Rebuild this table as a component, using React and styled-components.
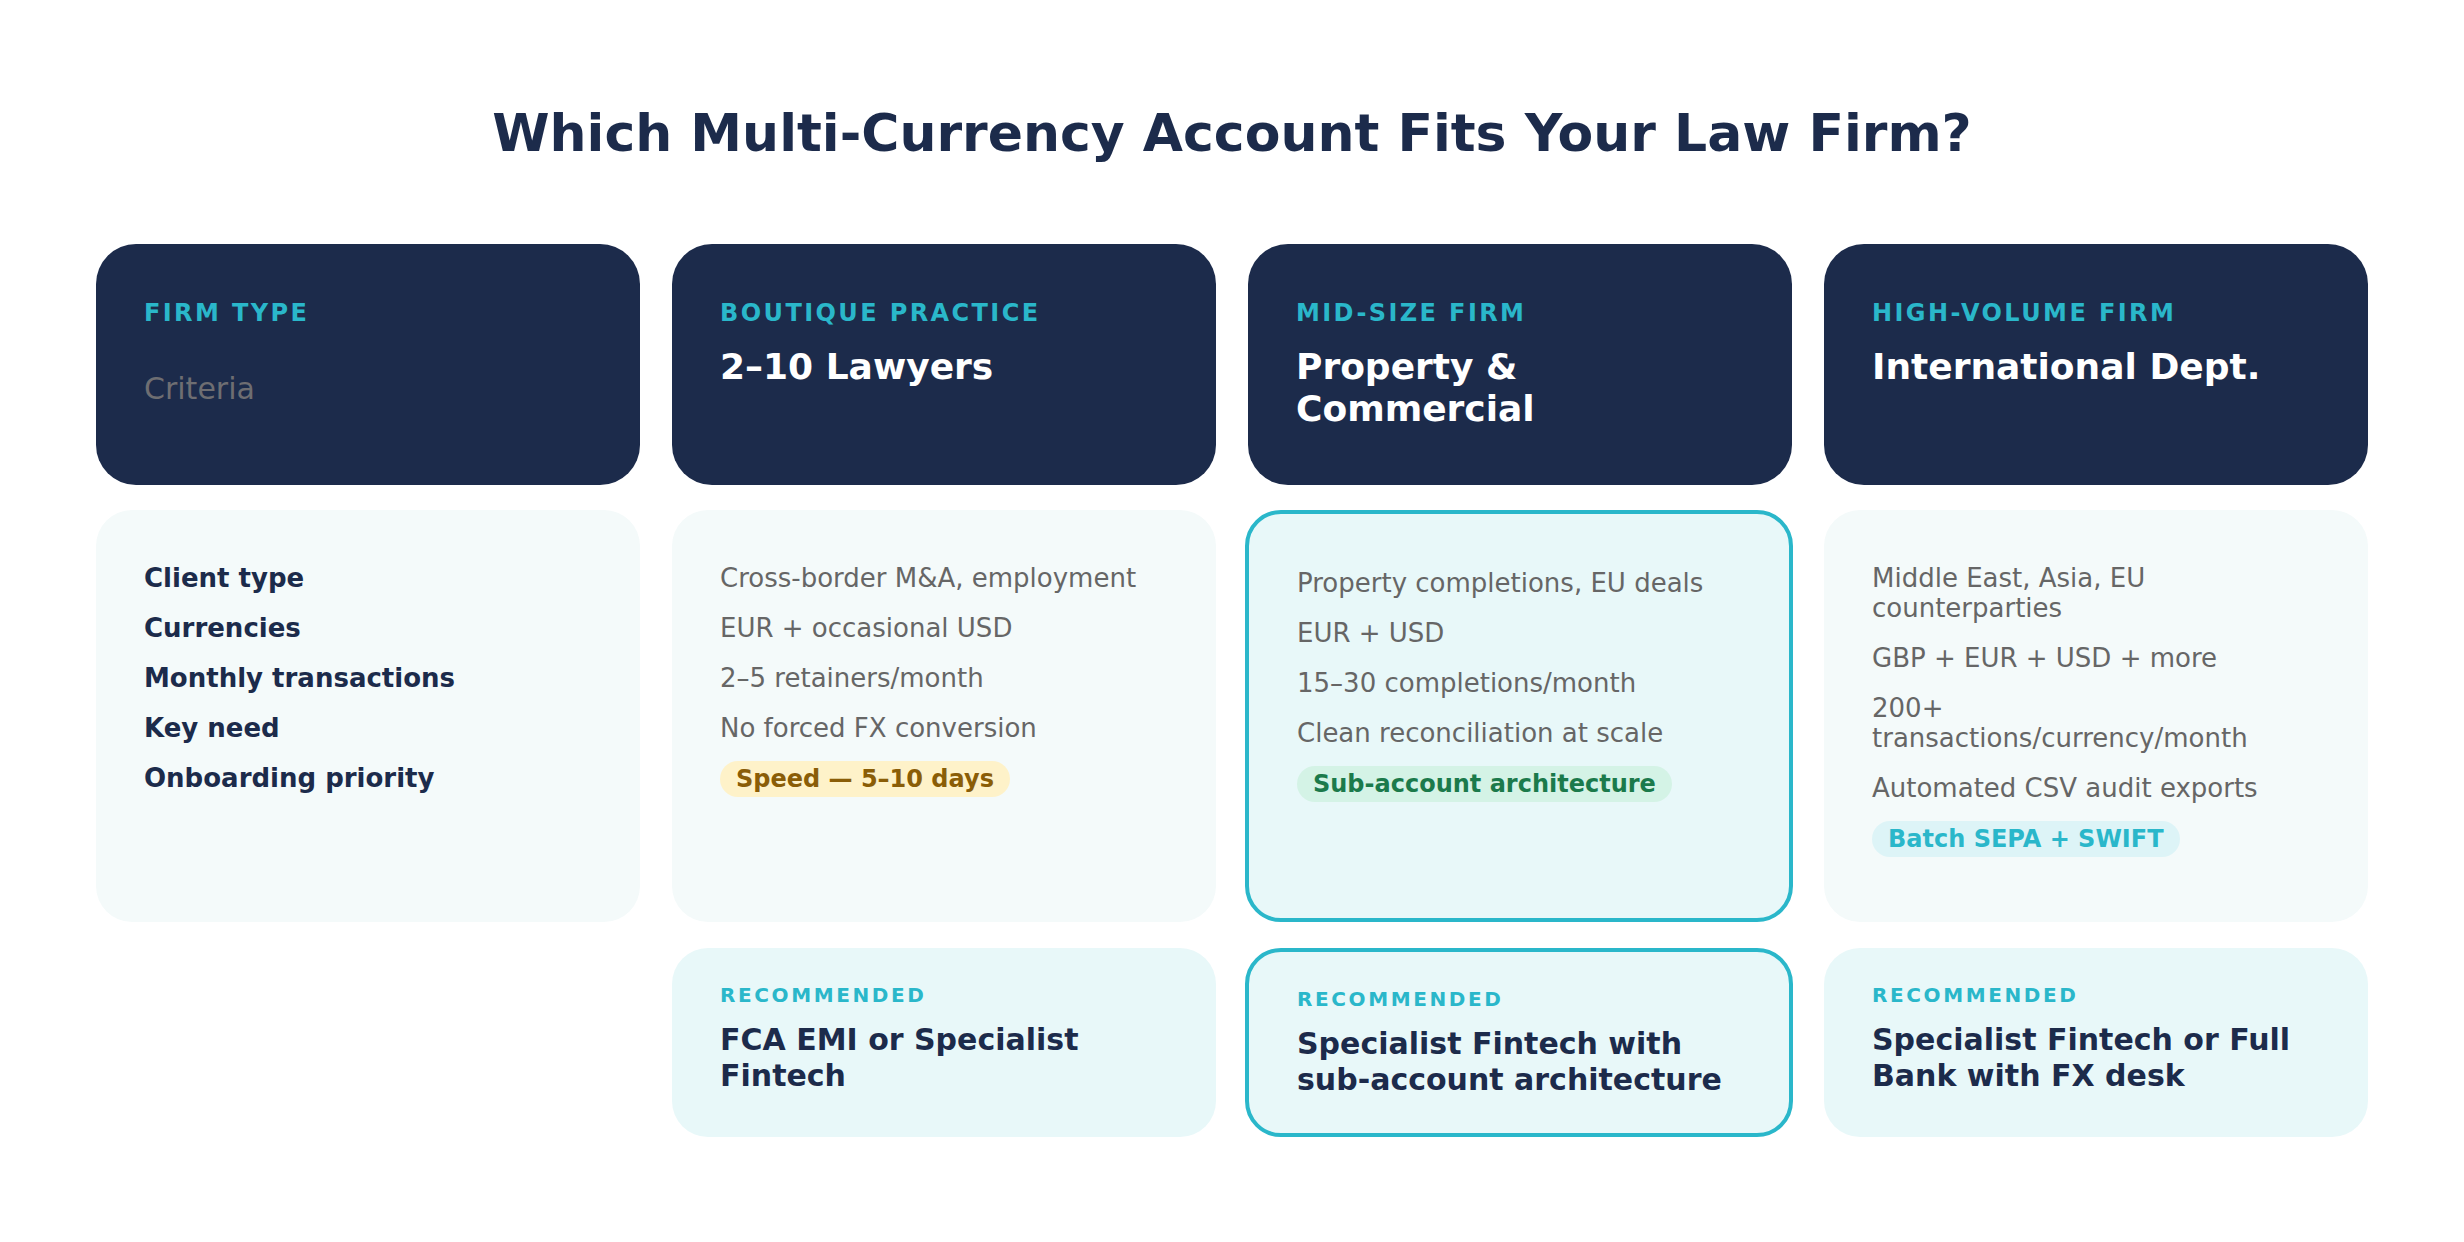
import React from "react";
import styled, { createGlobalStyle, css } from "styled-components";

const navy = "#1c2b4b";
const teal = "#2ab7ca";

const GlobalStyle = createGlobalStyle`
  html, body {
    margin: 0;
    padding: 0;
    background: #ffffff;
  }
  body {
    font-family: "DejaVu Sans", "Liberation Sans", sans-serif;
  }
`;

const Page = styled.div`
  padding: 103px 96px 0;
`;

const Title = styled.h1`
  margin: 0;
  text-align: center;
  font-size: 52px;
  font-weight: 700;
  line-height: normal;
  color: ${navy};
`;

const Grid = styled.div`
  margin-top: 80.5px;
  display: grid;
  grid-template-columns: repeat(4, 1fr);
  grid-template-rows: 241px 412px 189px;
  column-gap: 32px;
  row-gap: 25.5px;
`;

const HeaderCard = styled.div`
  background: ${navy};
  border-radius: 40px;
  padding: 55px 48px 0;
`;

const Label = styled.div`
  font-size: 24px;
  font-weight: 700;
  line-height: 28px;
  letter-spacing: 2.4px;
  text-transform: uppercase;
  color: ${teal};
`;

const HeaderTitle = styled.div`
  margin-top: 19px;
  font-size: 36px;
  font-weight: 700;
  line-height: 42px;
  color: #ffffff;
`;

const Criteria = styled.div`
  margin-top: 44px;
  font-size: 30px;
  line-height: 35px;
  color: #6e6e72;
`;

/* the featured column sits a touch wider with a thicker teal frame */
const highlight = css`
  margin: 0 -1px 0 -3px;
  border: 4px solid ${teal};
  background: #e8f8f9;
`;

const BodyCard = styled.div`
  display: flex;
  flex-direction: column;
  gap: 20px;
  border-radius: 36px;
  background: #f4fafa;
  padding: 53px 48px 0;
  ${(p) => p.$highlight && highlight}
  ${(p) => p.$highlight && "padding: 54px 48px 0;"}
`;

const Row = styled.div`
  font-size: 26px;
  line-height: 30px;
  font-weight: ${(p) => (p.$strong ? 700 : 400)};
  color: ${(p) => (p.$strong ? navy : "#666666")};
`;

const pillTones = {
  amber: { bg: "#fef2c9", fg: "#8a5d07" },
  green: { bg: "#d4f3e6", fg: "#1b7a4b" },
  teal: { bg: "#ddf4f7", fg: teal },
};

const Pill = styled.span`
  align-self: flex-start;
  margin-top: -2px;
  padding: 4px 16px;
  border-radius: 999px;
  font-size: 24px;
  font-weight: 700;
  line-height: 28px;
  background: ${(p) => pillTones[p.$tone].bg};
  color: ${(p) => pillTones[p.$tone].fg};
`;

const RecCard = styled.div`
  border-radius: 36px;
  background: #e8f8f9;
  padding: 36px 48px 0;
  ${(p) => p.$highlight && highlight}
  ${(p) => p.$highlight && "padding: 36px 48px 0;"}
`;

const RecLabel = styled.div`
  font-size: 20px;
  font-weight: 700;
  line-height: 23px;
  letter-spacing: 2.6px;
  color: ${teal};
`;

const RecTitle = styled.div`
  margin-top: 15px;
  font-size: 30px;
  font-weight: 700;
  line-height: 36px;
  color: ${navy};
`;

const Empty = styled.div``;

const criteria = [
  "Client type",
  "Currencies",
  "Monthly transactions",
  "Key need",
  "Onboarding priority",
];

const firms = [
  {
    label: "Boutique Practice",
    title: "2–10 Lawyers",
    rows: [
      "Cross-border M&A, employment",
      "EUR + occasional USD",
      "2–5 retainers/month",
      "No forced FX conversion",
    ],
    pill: { text: "Speed — 5–10 days", tone: "amber" },
    rec: "FCA EMI or Specialist Fintech",
  },
  {
    label: "Mid-Size Firm",
    title: "Property & Commercial",
    rows: [
      "Property completions, EU deals",
      "EUR + USD",
      "15–30 completions/month",
      "Clean reconciliation at scale",
    ],
    pill: { text: "Sub-account architecture", tone: "green" },
    rec: "Specialist Fintech with sub-account architecture",
    highlight: true,
  },
  {
    label: "High-Volume Firm",
    title: "International Dept.",
    rows: [
      "Middle East, Asia, EU counterparties",
      "GBP + EUR + USD + more",
      "200+ transactions/currency/month",
      "Automated CSV audit exports",
    ],
    pill: { text: "Batch SEPA + SWIFT", tone: "teal" },
    rec: "Specialist Fintech or Full Bank with FX desk",
  },
];

export default function App() {
  return (
    <>
      <GlobalStyle />
      <Page>
        <Title>Which Multi-Currency Account Fits Your Law Firm?</Title>
        <Grid>
          <HeaderCard>
            <Label>Firm Type</Label>
            <Criteria>Criteria</Criteria>
          </HeaderCard>
          {firms.map((f) => (
            <HeaderCard key={f.label}>
              <Label>{f.label}</Label>
              <HeaderTitle>{f.title}</HeaderTitle>
            </HeaderCard>
          ))}

          <BodyCard>
            {criteria.map((c) => (
              <Row key={c} $strong>
                {c}
              </Row>
            ))}
          </BodyCard>
          {firms.map((f) => (
            <BodyCard key={f.label} $highlight={f.highlight}>
              {f.rows.map((r) => (
                <Row key={r}>{r}</Row>
              ))}
              <Pill $tone={f.pill.tone}>{f.pill.text}</Pill>
            </BodyCard>
          ))}

          <Empty />
          {firms.map((f) => (
            <RecCard key={f.label} $highlight={f.highlight}>
              <RecLabel>RECOMMENDED</RecLabel>
              <RecTitle>{f.rec}</RecTitle>
            </RecCard>
          ))}
        </Grid>
      </Page>
    </>
  );
}
